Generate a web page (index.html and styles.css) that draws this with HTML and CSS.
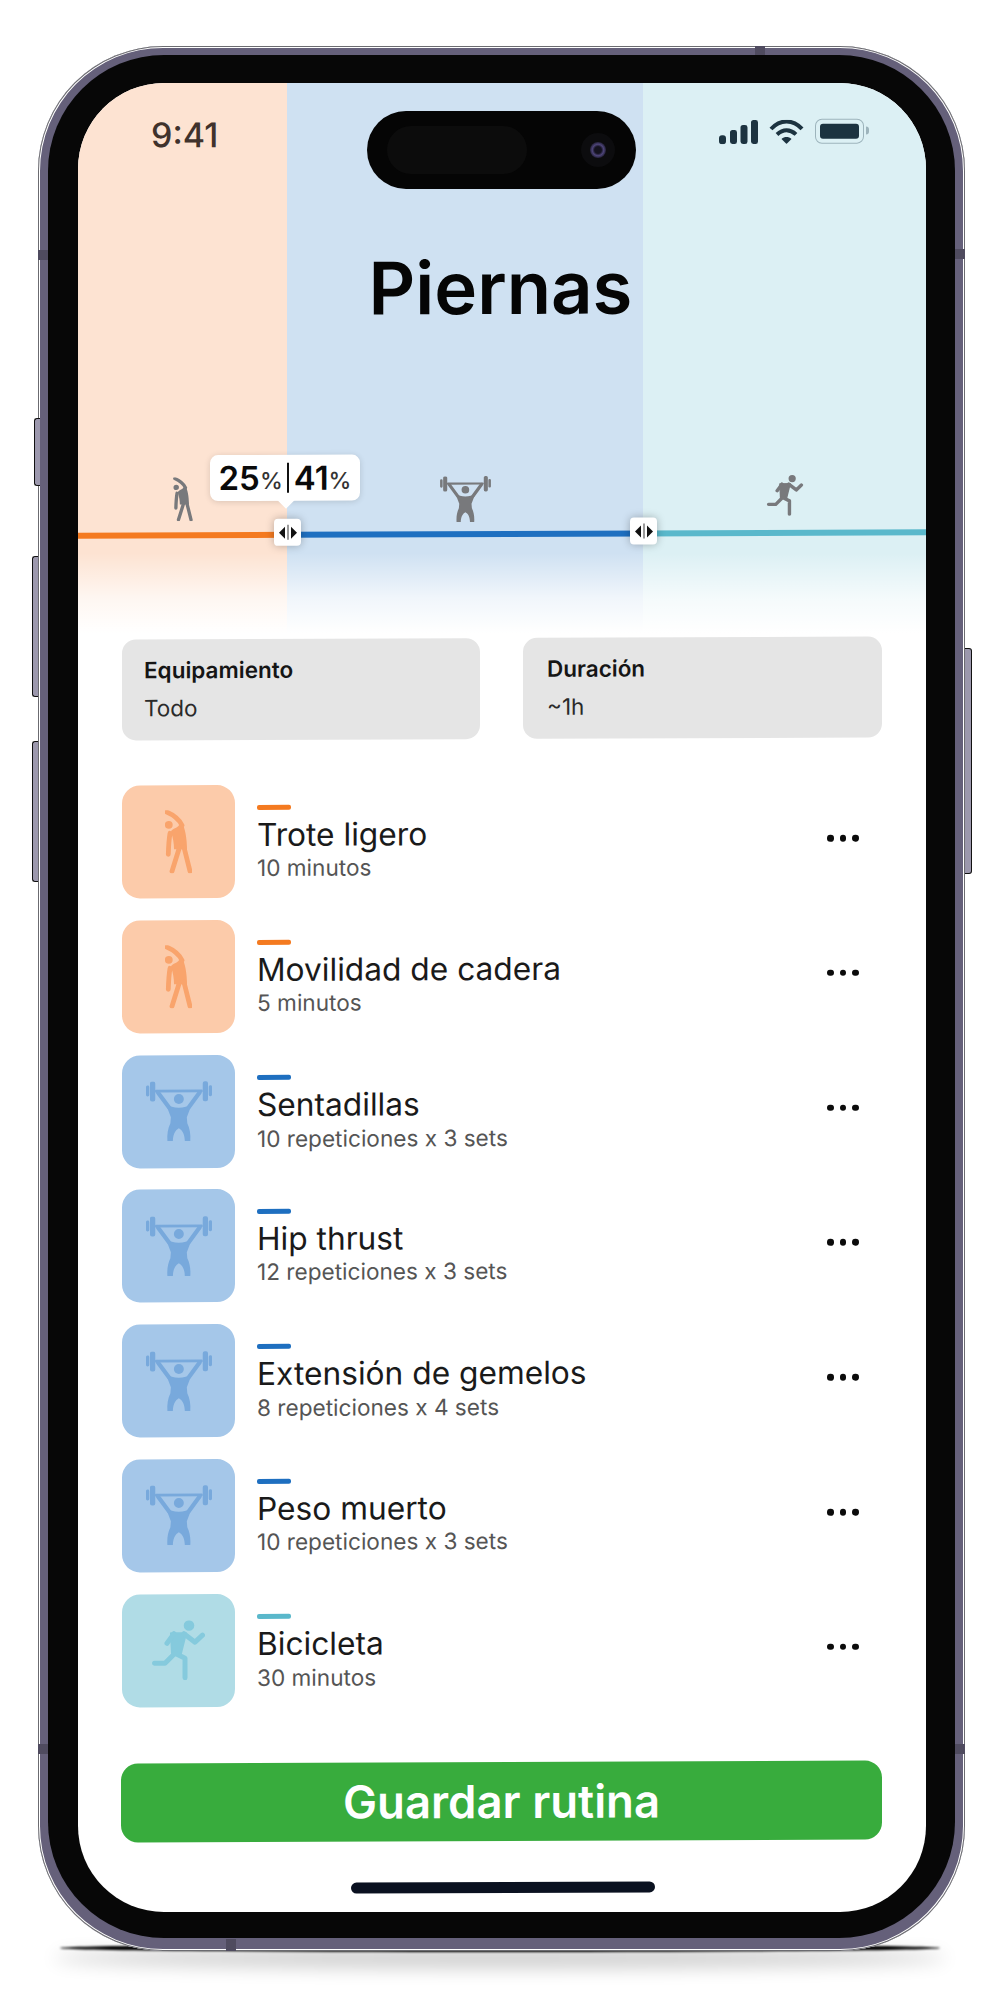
FILE: index.html
```html
<!DOCTYPE html>
<html lang="es">
<head>
<meta charset="utf-8">
<title>Piernas</title>
<link rel="stylesheet" href="styles.css">
</head>
<body>
<svg class="defs" width="0" height="0" aria-hidden="true">
  <symbol id="i-stretch" viewBox="0 0 27 63">
    <circle cx="3.800" cy="14.500" r="3.900" fill="currentColor"/>
    <path d="M6 21C8 18 12 18 14 15L17 12C20 18 22 28 22 39L9 39C9 33 8 28 6 21Z" fill="currentColor"/>
    <path d="M1.800 1.800C8 4.500 14 9 17 15M5 23C4 29 3.500 37 3.300 44M14.500 37L7 61M19 37L25 61" fill="none" stroke="currentColor" stroke-width="4.800" stroke-linecap="round"/>
  </symbol>
  <symbol id="i-barbell" viewBox="0 0 66.300 60">
    <g fill="currentColor">
      <rect x="0" y="4" width="3.300" height="11" rx="1.500"/>
      <rect x="4" y="0" width="5.300" height="20" rx="2"/>
      <rect x="57" y="0" width="5.300" height="20" rx="2"/>
      <rect x="63" y="4" width="3.300" height="11" rx="1.500"/>
      <rect x="9" y="8.300" width="48" height="2.800" rx="1"/>
      <circle cx="33" cy="17.700" r="5"/>
      <path d="M20 23C24 25 28 26.500 33 26.500C38 26.500 42 25 46 23L41 36L41.500 42C44 47 45 53 44.500 60L39 60C39 54 37 49 33 47C29 49 27 54 27 60L21.500 60C21 53 22 47 24.500 42L25 36Z"/>
    </g>
    <path d="M12 11L23 26M54 11L43 26" fill="none" stroke="currentColor" stroke-width="4.200" stroke-linecap="round"/>
  </symbol>
  <symbol id="i-run" viewBox="0 0 53 60">
    <circle cx="37" cy="5.300" r="5.300" fill="currentColor"/>
    <path d="M19 13L34 13L28.500 35L20 33Z" fill="currentColor" stroke="currentColor" stroke-width="2" stroke-linejoin="round"/>
    <path d="M22 13.500L15 23M32 13.500L43 22L50.500 15M23 33L13 43L2.500 43M23 33L33 38L33 57.500" fill="none" stroke="currentColor" stroke-width="5" stroke-linecap="round" stroke-linejoin="round"/>
  </symbol>
</svg>

<main class="stage">
  <div class="phone">
    <span class="key key-mute"></span>
    <span class="key key-up"></span>
    <span class="key key-down"></span>
    <span class="key key-power"></span>
    <span class="band band-top"></span>
    <span class="band band-bottom"></span>
    <span class="band band-lt"></span>
    <span class="band band-lb"></span>
    <span class="band band-rt"></span>
    <span class="band band-rb"></span>
    <div class="bezel">
      <div class="screen">
        <div class="tints">
          <div class="tint tint-warm"></div>
          <div class="tint tint-strength"></div>
          <div class="tint tint-cardio"></div>
        </div>
        <div class="content">
          <div class="status">
            <span class="clock">9:41</span>
            <div class="status-icons">
              <svg class="ic-signal" viewBox="0 0 39 24"><g fill="currentColor"><rect x="0" y="15" width="7" height="9" rx="3"/><rect x="11" y="10" width="7" height="14" rx="2.500"/><rect x="21.500" y="5" width="7" height="19" rx="2.500"/><rect x="32" y="0" width="7" height="24" rx="2.500"/></g></svg>
              <svg class="ic-wifi" viewBox="0 0 35 24"><g fill="none" stroke="currentColor" stroke-width="4"><path d="M2 9C11-1 24-1 33 9"/><path d="M8 14.500C14 9 21 9 27 14.500"/></g><path d="M12.500 19C15.500 16.500 19.500 16.500 22.500 19L17.500 24Z" fill="currentColor"/></svg>
              <div class="battery"><span class="battery-level"></span></div>
            </div>
          </div>
          <h1 class="title">Piernas</h1>
          <div class="track">
            <div class="segment segment-warm">
              <svg class="seg-icon ic-s-stretch"><use href="#i-stretch"/></svg>
              <div class="seg-line"></div>
            </div>
            <div class="segment segment-strength">
              <svg class="seg-icon ic-s-barbell"><use href="#i-barbell"/></svg>
              <div class="seg-line"></div>
            </div>
            <div class="segment segment-cardio">
              <svg class="seg-icon ic-s-run"><use href="#i-run"/></svg>
              <div class="seg-line"></div>
            </div>
            <div class="tooltip"><b>25</b><i>%</i><span class="tip-sep"></span><b>41</b><i>%</i></div>
            <div class="handle handle-a"><span class="tri tri-l"></span><span class="tri-sep"></span><span class="tri tri-r"></span></div>
            <div class="handle handle-b"><span class="tri tri-l"></span><span class="tri-sep"></span><span class="tri tri-r"></span></div>
          </div>
          <div class="filters">
            <div class="filter"><strong>Equipamiento</strong><span>Todo</span></div>
            <div class="filter filter-end"><strong>Duración</strong><span>~1h</span></div>
          </div>
          <ul class="list">
            <li class="row warm"><div class="tile"><svg class="t-stretch"><use href="#i-stretch"/></svg></div><div class="info"><span class="tick"></span><h2>Trote ligero</h2><p>10 minutos</p></div><div class="more"><span></span><span></span><span></span></div></li>
            <li class="row warm"><div class="tile"><svg class="t-stretch"><use href="#i-stretch"/></svg></div><div class="info"><span class="tick"></span><h2>Movilidad de cadera</h2><p>5 minutos</p></div><div class="more"><span></span><span></span><span></span></div></li>
            <li class="row strength"><div class="tile"><svg class="t-barbell"><use href="#i-barbell"/></svg></div><div class="info"><span class="tick"></span><h2>Sentadillas</h2><p class="low">10 repeticiones x 3 sets</p></div><div class="more"><span></span><span></span><span></span></div></li>
            <li class="row strength"><div class="tile"><svg class="t-barbell"><use href="#i-barbell"/></svg></div><div class="info"><span class="tick"></span><h2>Hip thrust</h2><p>12 repeticiones x 3 sets</p></div><div class="more"><span></span><span></span><span></span></div></li>
            <li class="row strength"><div class="tile"><svg class="t-barbell"><use href="#i-barbell"/></svg></div><div class="info"><span class="tick"></span><h2>Extensión de gemelos</h2><p class="low">8 repeticiones x 4 sets</p></div><div class="more"><span></span><span></span><span></span></div></li>
            <li class="row strength"><div class="tile"><svg class="t-barbell"><use href="#i-barbell"/></svg></div><div class="info"><span class="tick"></span><h2>Peso muerto</h2><p>10 repeticiones x 3 sets</p></div><div class="more"><span></span><span></span><span></span></div></li>
            <li class="row cardio"><div class="tile"><svg class="t-run"><use href="#i-run"/></svg></div><div class="info"><span class="tick"></span><h2>Bicicleta</h2><p class="low">30 minutos</p></div><div class="more"><span></span><span></span><span></span></div></li>
          </ul>
          <button class="save" type="button">Guardar rutina</button>
          <div class="home"></div>
        </div>
        <div class="island"><div class="island-pill"></div><div class="lens"><span></span></div></div>
      </div>
    </div>
  </div>
  <div class="ground"></div>
</main>
</body>
</html>
```
FILE: styles.css
```css
* { box-sizing: border-box; }
html, body { margin: 0; padding: 0; background: #fff; }
body { font-family: Inter, "Liberation Sans", sans-serif; color: #111; }
.defs { position: absolute; }
.stage { position: relative; width: 1000px; height: 1991px; padding: 46px 0 0 38px; overflow: hidden; }
.phone {
  position: relative; z-index: 1; width: 927px; height: 1905px; padding: 9px 10px 13px 10px;
  border-radius: 125px; background: #65607a;
  box-shadow: inset 0 0 0 1px #6b6b70, inset 0 0 0 2px #fff;
}
.key { position: absolute; width: 6px; background: #9c98ad; border: 1px solid #111; border-right: 0; border-radius: 3px 0 0 3px; }
.key-mute { left: -4px; top: 372px; height: 68px; }
.key-up { left: -6px; top: 510px; height: 141px; }
.key-down { left: -6px; top: 695px; height: 141px; }
.key-power { right: -7px; left: auto; top: 602px; height: 226px; width: 7px; border: 1px solid #111; border-left: 0; border-radius: 0 3px 3px 0; }
.band { position: absolute; background: #4f4b5f; }
.band-top { left: 717px; top: 0; width: 10px; height: 9px; }
.band-bottom { left: 188px; bottom: 0; width: 10px; height: 12px; }
.band-lt { left: 0; top: 204px; width: 10px; height: 10px; }
.band-lb { left: 0; top: 1698px; width: 10px; height: 10px; }
.band-rt { right: 0; top: 203px; width: 10px; height: 10px; }
.band-rb { right: 0; top: 1698px; width: 10px; height: 10px; }
.bezel { width: 907px; height: 1883px; padding: 28px 29px 26px 30px; background: #070707; border-radius: 116px; }
.screen { position: relative; width: 848px; height: 1829px; overflow: hidden; background: #fff; border-radius: 86px; }
.tints { position: absolute; left: 0; right: 0; top: 0; height: 560px; display: grid; grid-template-columns: 209px 356px 283px; }
.tints::after { content: ""; position: absolute; left: 0; right: 0; top: 470px; height: 90px; background: linear-gradient(180deg, rgba(255,255,255,0), rgba(255,255,255,.7) 50%, #fff 89%); }
.tint-warm { background: #fde3d2; }
.tint-strength { background: #cfe1f2; }
.tint-cardio { background: #dcf0f4; }
.content { position: relative; transform: skewY(-0.22deg); }

.status { height: 64px; padding: 33px 62px 0 73px; display: flex; justify-content: space-between; align-items: flex-start; }
.clock { font-size: 34px; line-height: 36px; font-weight: 500; color: #40322c; }
.status-icons { display: flex; align-items: flex-start; gap: 11px; color: #1c3340; padding-top: 5px; }
.ic-signal { width: 39px; height: 24px; }
.ic-wifi { width: 35px; height: 24px; }
.battery { position: relative; width: 49px; height: 25px; padding: 4px; border: 1.500px solid #9db4bc; border-radius: 7px; margin-top: -1px; }
.battery::after { content: ""; position: absolute; right: -6px; top: 7px; width: 3px; height: 8px; background: #9db4bc; border-radius: 0 3px 3px 0; }
.battery-level { display: block; height: 100%; background: #1c3340; border-radius: 3px; }

.title { margin: 105px 0 0; padding-right: 3px; text-align: center; font-size: 72.500px; line-height: 72px; font-weight: 600; color: #050505; }
.track { position: relative; margin-top: 152px; display: grid; grid-template-columns: 209px 356px 283px; }
.segment { display: flex; flex-direction: column; align-items: center; height: 61px; }
.seg-icon { height: 46px; color: #78797c; margin-bottom: 9px; flex: none; }
.ic-s-stretch { width: 22px; height: 44px; margin-bottom: 11px; }
.ic-s-barbell { width: 53px; }
.ic-s-run { width: 38px; height: 41px; margin-bottom: 14px; }
.seg-line { width: 100%; height: 6px; flex: none; }
.segment-warm .seg-line { background: #f47a20; }
.segment-strength .seg-line { background: #1e6fc0; }
.segment-cardio .seg-line { background: #5ab8cb; }
.tooltip { position: absolute; left: 132px; top: -22px; width: 150px; height: 46px; display: flex; align-items: center; justify-content: center; background: #fff; border-radius: 8px; box-shadow: 0 1px 6px rgba(0,0,0,.14); }
.tooltip::after { content: ""; position: absolute; left: 66px; top: 44px; border: 10px solid transparent; border-top-color: #fff; border-bottom: 0; }
.tooltip b { font-size: 33px; line-height: 40px; font-weight: 600; color: #0a0a0a; }
.tooltip i { font-size: 23px; font-style: normal; font-weight: 500; color: #333; padding-top: 5px; }
.tip-sep { width: 2px; height: 30px; margin: 0 5px 0 4px; background: #111; }
.handle { position: absolute; top: 42px; width: 27px; height: 27px; display: flex; align-items: center; justify-content: center; gap: 2px; background: #fff; border-radius: 4px; box-shadow: 0 0 8px rgba(0,0,0,.28); }
.handle-a { left: 196px; }
.handle-b { left: 552px; }
.tri { width: 0; height: 0; border: 5px solid transparent; border-width: 6px 6px; }
.tri-l { border-left: 0; border-right-color: #111; }
.tri-r { border-right: 0; border-left-color: #111; }
.tri-sep { width: 2px; height: 15px; background: #9a9a9a; }

.filters { display: grid; grid-template-columns: 358px 359px; column-gap: 43px; margin: 101px 0 0 44px; }
.filter { display: flex; flex-direction: column; height: 101px; padding: 18px 22px; background: #e5e5e5; border-radius: 14px; }
.filter-end { padding-left: 24px; }
.filter strong { font-size: 22.500px; line-height: 26px; font-weight: 600; color: #151515; }
.filter span { margin-top: 12px; font-size: 22.500px; line-height: 26px; color: #2a2a2a; }

.list { list-style: none; margin: 45px 0 0; padding: 0 44px; display: flex; flex-direction: column; gap: 21.800px; }
.row { display: flex; align-items: flex-start; height: 113px; }
.tile { width: 113px; height: 113px; display: flex; align-items: center; justify-content: center; border-radius: 18px; flex: none; }
.warm .tile { background: #fccbaa; color: #f9a46c; }
.strength .tile { background: #a5c7e9; color: #78a9dc; }
.cardio .tile { background: #b0dce6; color: #85cadd; }
.t-stretch { width: 27px; height: 63px; }
.t-barbell { width: 66px; height: 60px; }
.t-run { width: 53px; height: 60px; }
.info { flex: 1; padding: 20px 0 0 22px; }
.tick { display: block; width: 34px; height: 5px; border-radius: 2px; }
.warm .tick { background: #f47a20; }
.strength .tick { background: #1e6fc0; }
.cardio .tick { background: #5ab8cb; }
.info h2 { margin: 6px 0 0; font-size: 31.700px; line-height: 38px; font-weight: 400; color: #1a1a1a; }
.info p { margin: 0; font-size: 22.600px; line-height: 28px; color: #555; }
.info p.low { padding-top: 1px; }
.more { display: flex; gap: 6px; margin-top: 52px; margin-right: 23px; }
.more span { width: 6.700px; height: 6.700px; background: #0b0b0b; border-radius: 50%; }

.save { display: block; width: 761px; height: 79px; margin: 56px 0 0 43px; padding: 0; border: 0; border-radius: 17px; background: #38ac3d; color: #fff; font: 600 45.500px/79px Inter, "Liberation Sans", sans-serif; }
.home { width: 304px; height: 11px; margin: 41px 0 0 273px; background: #0a1120; border-radius: 6px; }

.island { position: absolute; left: 289px; top: 28px; width: 269px; height: 78px; padding: 15px 20px; display: flex; align-items: flex-start; justify-content: space-between; background: #050505; border-radius: 39px; }
.island-pill { width: 140px; height: 48px; background: #0c0c0c; border-radius: 24px; }
.lens { display: flex; align-items: center; justify-content: center; width: 34px; height: 34px; margin: 7px 1px 0 0; background: #0c0c0e; border-radius: 50%; }
.lens span { width: 16px; height: 16px; border-radius: 50%; background: radial-gradient(circle at 50% 50%, #14121f 0 30%, #4d4478 50%, #1c1a2c 75%); }

.ground { position: absolute; left: 60px; top: 1944px; width: 880px; height: 8px; background: #000; border-radius: 50%; box-shadow: 0 10px 18px 6px rgba(0,0,0,.2); filter: blur(1px); }
```
